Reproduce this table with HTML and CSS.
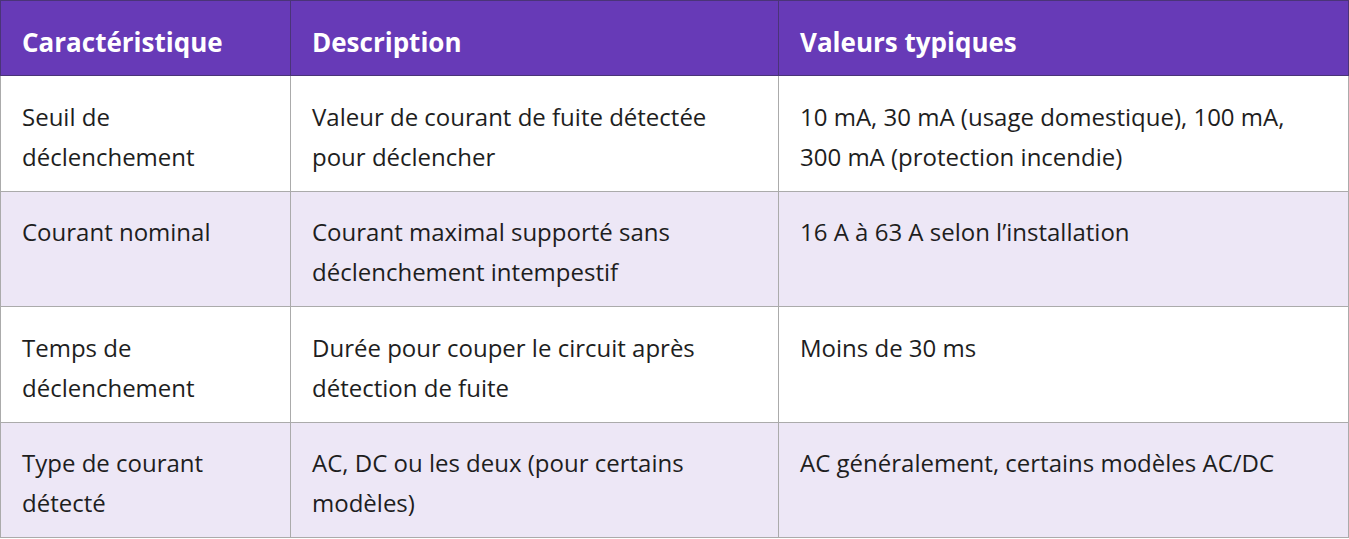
FILE: index.html
```html
<!DOCTYPE html>
<html lang="fr">
<head>
<meta charset="utf-8">
<title>Caractéristiques</title>
<link rel="stylesheet" href="styles.css">
</head>
<body>
<table class="spec-table">
  <colgroup>
    <col class="col-1">
    <col class="col-2">
    <col class="col-3">
  </colgroup>
  <thead>
    <tr>
      <th>Caractéristique</th>
      <th>Description</th>
      <th>Valeurs typiques</th>
    </tr>
  </thead>
  <tbody>
    <tr>
      <td>Seuil de déclenchement</td>
      <td>Valeur de courant de fuite détectée pour déclencher</td>
      <td>10 mA, 30 mA (usage domestique), 100 mA, 300 mA (protection incendie)</td>
    </tr>
    <tr>
      <td>Courant nominal</td>
      <td>Courant maximal supporté sans déclenchement intempestif</td>
      <td>16 A à 63 A selon l’installation</td>
    </tr>
    <tr>
      <td>Temps de déclenchement</td>
      <td>Durée pour couper le circuit après détection de fuite</td>
      <td>Moins de 30 ms</td>
    </tr>
    <tr>
      <td>Type de courant détecté</td>
      <td>AC, DC ou les deux (pour certains modèles)</td>
      <td>AC généralement, certains modèles AC/DC</td>
    </tr>
  </tbody>
</table>
</body>
</html>
```

FILE: styles.css
```css
html, body {
  margin: 0;
  padding: 0;
  background: #ffffff;
}

.spec-table {
  width: 1348px;
  table-layout: fixed;
  border-collapse: collapse;
  font-family: "Open Sans", "Noto Sans", "DejaVu Sans", sans-serif;
  font-size: 24px;
  line-height: 40px;
  color: #1e1e1e;
}

.col-1 { width: 290px; }
.col-2 { width: 488px; }
.col-3 { width: 570px; }

.spec-table th {
  background: #673ab7;
  color: #ffffff;
  font-size: 26px;
  font-weight: 700;
  text-align: left;
  padding: 21px 21px 13px;
  border: 1px solid #4a3478;
}

.spec-table td {
  text-align: left;
  vertical-align: top;
  padding: 20.5px 21px 14px;
  border: 1px solid #ababab;
}

.spec-table tbody tr:nth-child(even) td {
  background: #ede7f6;
}
```
